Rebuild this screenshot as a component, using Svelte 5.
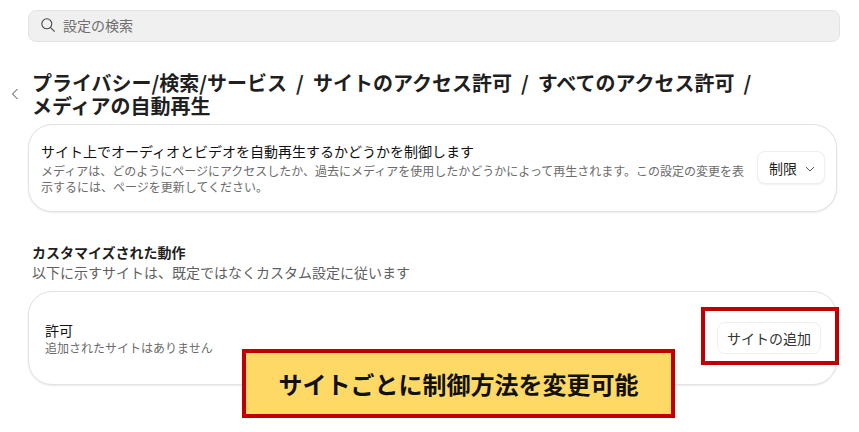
<script lang="ts">
  const crumbs = "プライバシー/検索/サービス / サイトのアクセス許可 / すべてのアクセス許可 /";
</script>

<div class="page">
  <div class="search">
    <svg class="search-icon" width="16" height="16" viewBox="0 0 16 16" fill="none" stroke="#444" stroke-width="1.1">
      <circle cx="6.8" cy="6.8" r="5" />
      <path d="M10.4 10.4 L14.6 14.6" />
    </svg>
    <span>設定の検索</span>
  </div>

  <header class="head">
    <svg class="back" width="8" height="12" viewBox="0 0 8 12" fill="none" stroke="#444" stroke-width="1">
      <path d="M6.5 1 L1.5 6 L6.5 11" />
    </svg>
    <h1>{crumbs}<br />メディアの自動再生</h1>
  </header>

  <section class="card autoplay">
    <div class="text">
      <div class="label">サイト上でオーディオとビデオを自動再生するかどうかを制御します</div>
      <p>メディアは、どのようにページにアクセスしたか、過去にメディアを使用したかどうかによって再生されます。この設定の変更を表示するには、ページを更新してください。</p>
    </div>
    <button type="button" class="select">
      制限
      <svg class="caret" width="10" height="6" viewBox="0 0 10 6" fill="none" stroke="#555" stroke-width="1">
        <path d="M1 1 L5 5 L9 1" />
      </svg>
    </button>
  </section>

  <div class="section-title">
    <h2>カスタマイズされた動作</h2>
    <p>以下に示すサイトは、既定ではなくカスタム設定に従います</p>
  </div>

  <section class="card allow">
    <div class="text">
      <div class="label small">許可</div>
      <p>追加されたサイトはありません</p>
    </div>
    <button type="button" class="add">サイトの追加</button>
  </section>

  <div class="callout-frame"></div>
  <div class="callout">サイトごとに制御方法を変更可能</div>
</div>

<style>
  :global(body) {
    margin: 0;
    background: #fff;
  }

  .page {
    position: relative;
    width: 859px;
    height: 432px;
    overflow: hidden;
    box-sizing: border-box;
    padding: 10px 22px 0 28px;
    font-family: "Noto Sans CJK JP", "Noto Sans", sans-serif;
    color: #1f1f1f;
  }

  .search {
    display: flex;
    align-items: center;
    gap: 7px;
    width: 812px;
    height: 32px;
    box-sizing: border-box;
    margin-right: -3px;
    padding-left: 11px;
    padding-bottom: 3px;
    background: #f0f0f0;
    border: 1px solid #e3e3e3;
    border-radius: 8px;
    font-size: 14px;
    color: #6e6e6e;
  }

  .search-icon {
    flex-shrink: 0;
  }

  .head {
    display: flex;
    align-items: center;
    margin-top: 29px;
    height: 46px;
  }

  .back {
    margin-left: -17px;
    margin-right: 13px;
    flex-shrink: 0;
  }

  h1 {
    margin: 0;
    white-space: nowrap;
    font-size: 20px;
    line-height: 23px;
    font-weight: 700;
    word-spacing: 4.5px;
    color: #1f1f1f;
  }

  .card {
    display: flex;
    align-items: center;
    justify-content: space-between;
    box-sizing: border-box;
    width: 809px;
    background: #fff;
    border: 1px solid #e2e2e2;
    border-radius: 24px;
    box-shadow: 0 1px 2px rgba(0, 0, 0, 0.08);
  }

  .autoplay {
    height: 88px;
    margin-top: 7px;
    padding: 0 11px 1px 12px;
  }

  .text p {
    margin: 0;
    font-size: 12px;
    line-height: 16px;
    color: #6b6b6b;
  }

  .autoplay .text {
    width: 708px;
  }

  .label {
    font-size: 14px;
    line-height: 20px;
    font-weight: 400;
    color: #111;
    margin-bottom: 2px;
  }

  .label.small {
    line-height: 18px;
    margin-bottom: 1px;
  }

  .select {
    display: flex;
    align-items: center;
    gap: 8px;
    box-sizing: border-box;
    width: 68px;
    height: 33px;
    padding: 0 0 0 11px;
    background: #fff;
    border: 1px solid #eee;
    border-radius: 8px;
    box-shadow: 0 1px 2px rgba(0, 0, 0, 0.06);
    font: inherit;
    font-size: 14px;
    color: #1f1f1f;
  }

  .caret {
    margin-top: 2px;
  }

  .section-title {
    margin: 31px 0 0 4px;
  }

  h2 {
    margin: 0;
    font-size: 14px;
    line-height: 19px;
    font-weight: 700;
  }

  .section-title p {
    margin: 0;
    font-size: 14px;
    line-height: 20px;
    color: #5f5f5f;
  }

  .allow {
    height: 94px;
    margin-top: 9px;
    padding: 0 15px 0 16px;
  }

  .add {
    box-sizing: border-box;
    width: 104px;
    height: 32px;
    margin-bottom: 1px;
    padding: 0;
    background: #fff;
    border: 1px solid #eee;
    border-radius: 8px;
    font: inherit;
    font-size: 14px;
    color: #333;
  }

  .callout-frame {
    position: absolute;
    left: 701px;
    top: 307px;
    width: 138px;
    height: 58px;
    box-sizing: border-box;
    border: 4px solid #c00000;
  }

  .callout {
    position: absolute;
    left: 242px;
    top: 349px;
    width: 433px;
    height: 69px;
    box-sizing: border-box;
    display: flex;
    align-items: center;
    justify-content: center;
    background: #ffd966;
    border: 4px solid #c00000;
    font-size: 24px;
    font-weight: 700;
    color: #111;
  }
</style>
